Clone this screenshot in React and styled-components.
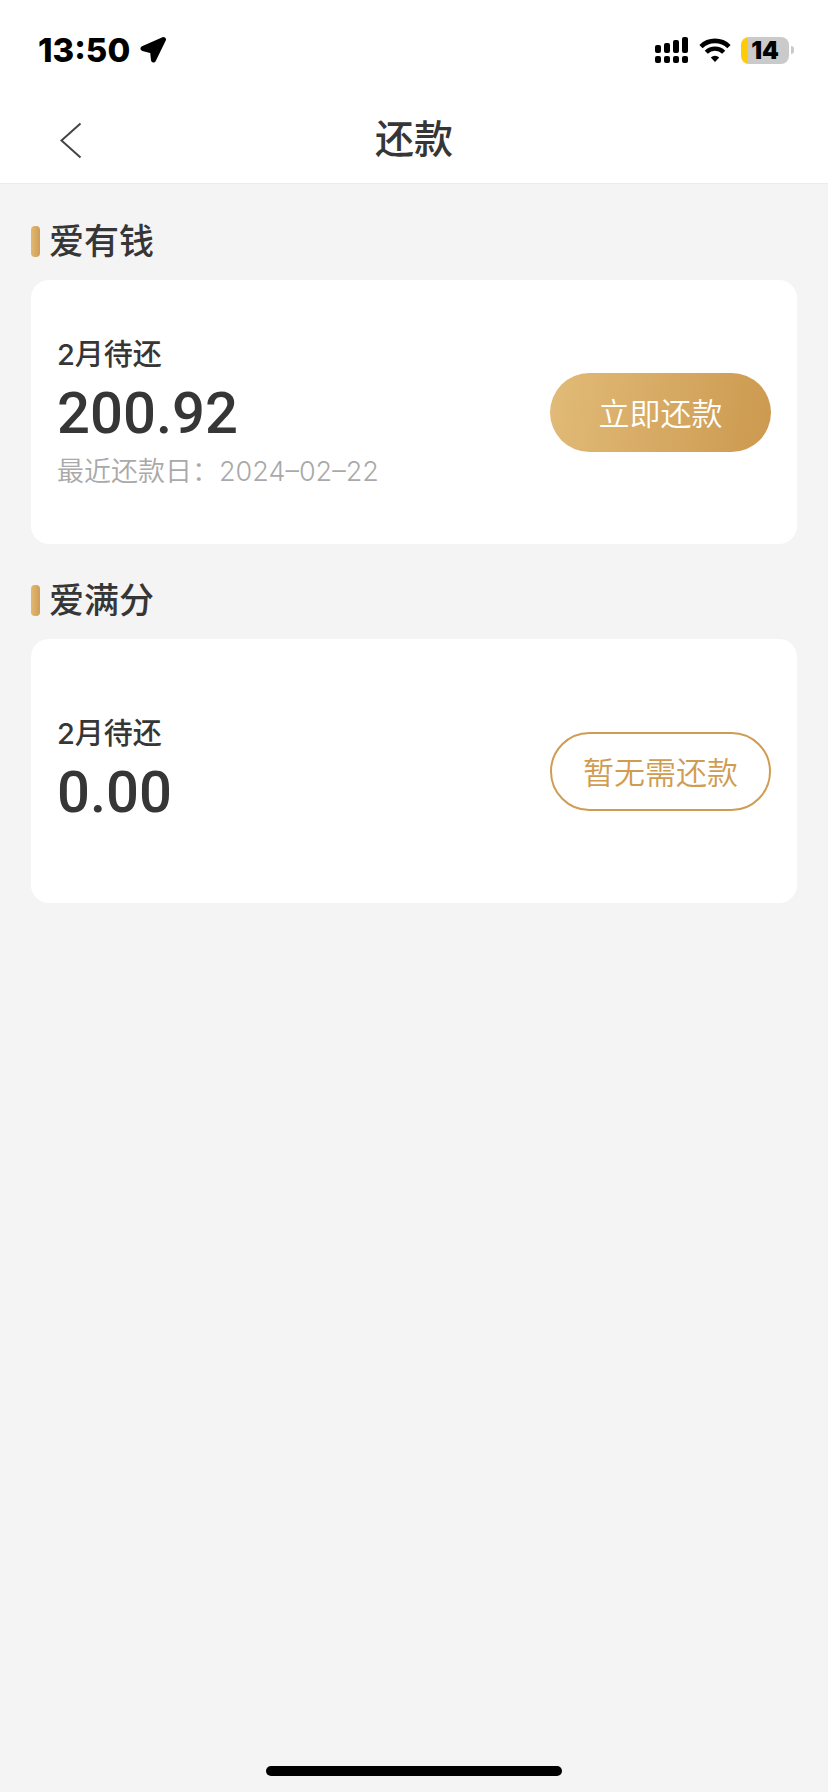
import React from 'react'
import styled, { createGlobalStyle, css } from 'styled-components'

const GlobalStyle = createGlobalStyle`
  * {
    box-sizing: border-box;
  }

  body {
    margin: 0;
    background: #f4f4f4;
    color: #363636;
    font-family: Inter, "Noto Sans CJK SC", sans-serif;
  }
`;

const Page = styled.div`
  display: flex;
  flex-direction: column;
  min-height: 100vh;
`;

const StatusBar = styled.div`
  display: flex;
  align-items: center;
  justify-content: space-between;
  height: 98px;
  padding: 2px 34px 0 38px;
  background: #fff;
  color: #000;
`;

const StatusGroup = styled.div`
  display: flex;
  align-items: center;
  gap: ${props => props.$gap}px;
`;

const Clock = styled.span`
  font-size: 33px;
  font-weight: 800;
  line-height: 40px;
`;

const Battery = styled.div`
  display: flex;
  align-items: center;
  gap: 2px;
`;

const BatteryBody = styled.div`
  width: 48px;
  height: 27px;
  border-radius: 8px;
  background: linear-gradient(to right, #fecb05 7px, #cacaca 7px);
  font-size: 24px;
  font-weight: 900;
  line-height: 27px;
  text-align: center;
`;

const BatteryCap = styled.div`
  width: 3px;
  height: 8px;
  border-radius: 0 3px 3px 0;
  background: #cacaca;
`;

const NavBar = styled.header`
  display: grid;
  grid-template-columns: 100px 1fr 100px;
  align-items: center;
  height: 86px;
  border-bottom: 1px solid #ebebeb;
  background: #fff;
`;

const BackButton = styled.button`
  display: flex;
  justify-content: flex-end;
  padding: 4px 18px 4px 0;
  border: 0;
  background: none;
  color: #444;
  cursor: pointer;
`;

const NavTitle = styled.h1`
  margin: 0;
  padding-bottom: 4px;
  font-size: 39px;
  font-weight: 500;
  line-height: 48px;
  text-align: center;
`;

const Content = styled.main`
  flex: 1;
  padding: 1px 31px 0;
`;

const SectionTitle = styled.h2`
  display: flex;
  align-items: center;
  gap: 9px;
  margin: 0;
  padding: 32px 0 15px;
  font-size: 35px;
  font-weight: 500;
  line-height: 48px;

  &::before {
    content: '';
    width: 9px;
    height: 31px;
    border-radius: 4px;
    background: linear-gradient(to right, #e1b971, #cf9d55);
  }
`;

const Card = styled.div`
  display: flex;
  align-items: center;
  justify-content: space-between;
  min-height: 264px;
  padding: 24px 26px;
  border-radius: 18px;
  background: #fff;
`;

const Bill = styled.div`
  padding-top: 2px;
`;

const Label = styled.div`
  font-size: 29px;
  font-weight: 500;
  line-height: 40px;
`;

const Amount = styled.div`
  font-family: Roboto, "Noto Sans CJK SC", sans-serif;
  font-size: 58px;
  font-weight: 500;
  line-height: 76px;
`;

const DueDate = styled.div`
  padding-top: 2px;
  color: #a9a9a9;
  font-size: 27px;
  font-weight: 350;
  line-height: 38px;
`;

const PayButton = styled.button`
  width: 221px;
  height: 79px;
  padding: 0 0 2px;
  border: 0;
  border-radius: 40px;
  background: linear-gradient(100deg, #e1bb78, #cc994f);
  color: #fff;
  font-family: inherit;
  font-size: 31px;
  font-weight: 350;
  cursor: pointer;

  ${props => props.$outlined && css`
    border: 2px solid #cf9c51;
    background: #fff;
    color: #cf9c51;
  `}
`;

const HomeIndicator = styled.div`
  width: 296px;
  height: 10px;
  margin: 0 auto 16px;
  border-radius: 5px;
  background: #000;
`;

const products = [
  { name: '爱有钱', label: '2月待还', amount: '200.92', dueDate: '2024–02–22' },
  { name: '爱满分', label: '2月待还', amount: '0.00' },
]

function LocationIcon() {
  return (
    <svg width="28" height="28" viewBox="0 0 28 28" aria-hidden="true">
      <path
        d="M23.5 3.5 L13.5 24 L12.5 15 L3 12.5 Z"
        fill="currentColor"
        stroke="currentColor"
        strokeWidth="5"
        strokeLinejoin="round"
      />
    </svg>
  )
}

function SignalIcon() {
  return (
    <svg width="34" height="27" viewBox="0 0 34 27" fill="currentColor" aria-hidden="true">
      {[8, 10, 13, 16].map((height, i) => (
        <g key={height}>
          <rect x={i * 9} y={16 - height} width="6" height={height} rx="2" />
          <rect x={i * 9} y="19" width="6" height="7" rx="2" />
        </g>
      ))}
    </svg>
  )
}

function WifiIcon() {
  return (
    <svg width="32" height="24" viewBox="0 0 32 24" fill="none" aria-hidden="true">
      <path d="M2 8.6 A20 20 0 0 1 30 8.6" stroke="currentColor" strokeWidth="4.6" />
      <path d="M7.3 14.2 A12.4 12.4 0 0 1 24.7 14.2" stroke="currentColor" strokeWidth="4.4" />
      <path d="M16 24 L11.8 19.4 A6.2 6.2 0 0 1 20.2 19.4 Z" fill="currentColor" />
    </svg>
  )
}

function BackIcon() {
  return (
    <svg width="22" height="37" viewBox="0 0 22 37" fill="none" aria-hidden="true">
      <path d="M20.5 1.5 L1.5 18.5 L20.5 35.5" stroke="currentColor" strokeWidth="2" />
    </svg>
  )
}

function Product({ name, label, amount, dueDate }) {
  return (
    <section>
      <SectionTitle>{name}</SectionTitle>
      <Card>
        <Bill>
          <Label>{label}</Label>
          <Amount>{amount}</Amount>
          {dueDate && <DueDate>最近还款日：{dueDate}</DueDate>}
        </Bill>
        <PayButton type="button" $outlined={!dueDate}>
          {dueDate ? '立即还款' : '暂无需还款'}
        </PayButton>
      </Card>
    </section>
  )
}

export default function App() {
  return (
    <Page>
      <GlobalStyle />
      <StatusBar>
        <StatusGroup $gap={10}>
          <Clock>13:50</Clock>
          <LocationIcon />
        </StatusGroup>
        <StatusGroup $gap={10}>
          <SignalIcon />
          <WifiIcon />
          <Battery>
            <BatteryBody>14</BatteryBody>
            <BatteryCap />
          </Battery>
        </StatusGroup>
      </StatusBar>
      <NavBar>
        <BackButton type="button" aria-label="返回">
          <BackIcon />
        </BackButton>
        <NavTitle>还款</NavTitle>
      </NavBar>
      <Content>
        {products.map(product => <Product key={product.name} {...product} />)}
      </Content>
      <HomeIndicator />
    </Page>
  )
}
